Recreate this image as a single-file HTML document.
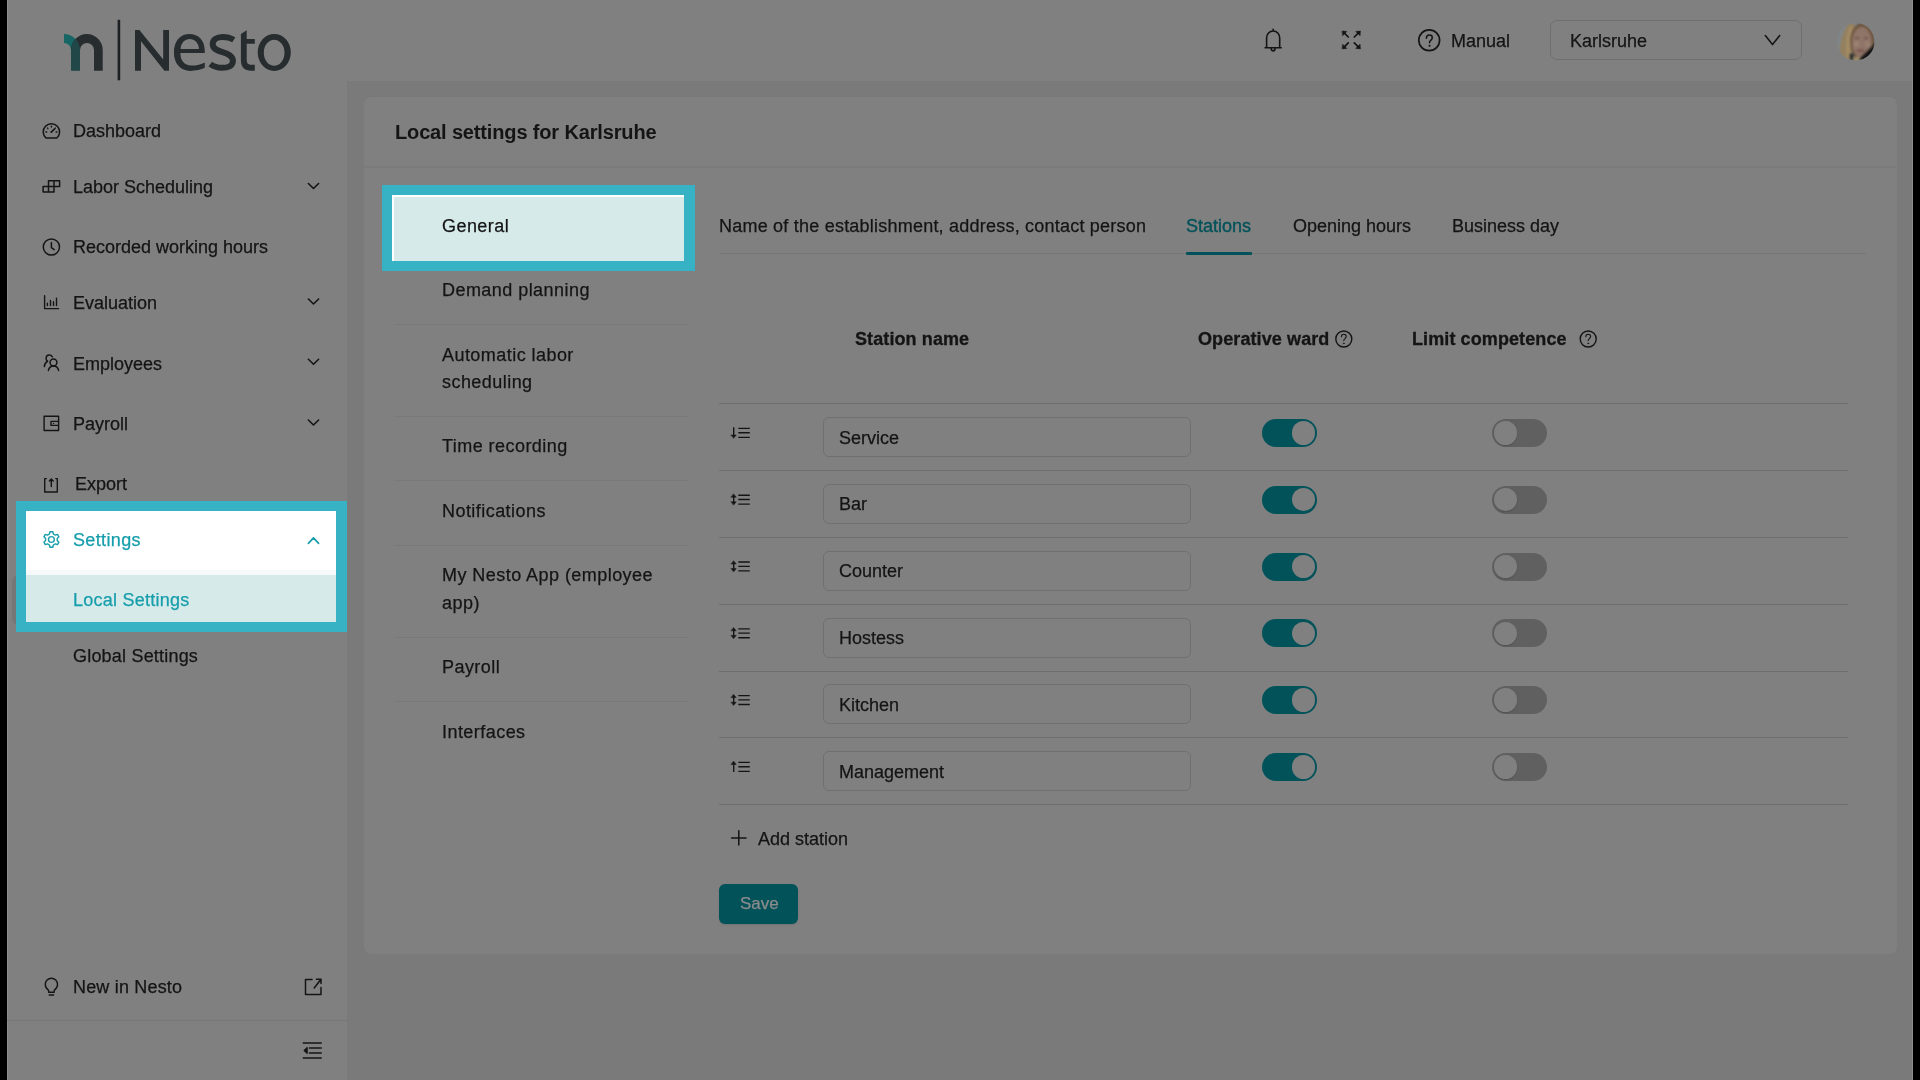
<!DOCTYPE html>
<html><head><meta charset="utf-8">
<style>
*{box-sizing:border-box;margin:0;padding:0}
html,body{width:1920px;height:1080px;overflow:hidden;background:#000}
body{position:relative;font-family:"Liberation Sans",sans-serif;color:#141414;font-size:18px;line-height:18px}
.a{position:absolute}
.t{position:absolute;white-space:nowrap;font-size:18px;line-height:18px;-webkit-text-stroke:0.25px currentColor;will-change:transform}
.b{font-weight:700;-webkit-text-stroke:0}
.div{position:absolute;height:1px;background:#787878}
svg{position:absolute;overflow:visible}
</style></head><body>
<!-- app background -->
<div class="a" style="left:7px;top:0;width:1906px;height:1080px;background:#808080"></div>
<div class="a" style="left:7px;top:0;width:1px;height:1080px;background:#8e8e8e"></div>
<div class="a" style="left:1912px;top:0;width:1px;height:1080px;background:#8e8e8e"></div>
<!-- main area bg -->
<div class="a" style="left:347px;top:81px;width:1565px;height:999px;background:#7a7a7a"></div>
<!-- card -->
<div class="a" style="left:364px;top:97px;width:1533px;height:857px;background:#808080;border-radius:7px;box-shadow:0 0 0 1px #797979"></div>

<!-- SIDEBAR -->
<!-- logo -->
<svg style="left:0;top:0" width="400" height="90" viewBox="0 0 400 90">
  <defs>
    <clipPath id="hookc"><path d="M64 34 A16 16 0 0 1 80 50 L71 50 A7 7 0 0 0 64 43 Z"/></clipPath>
  </defs>
  <path d="M64 34 A16 16 0 0 1 80 50 L71 50 A7 7 0 0 0 64 43 Z" fill="#156664"/>
  <path d="M71 50 A15.85 16 0 0 1 102.7 50 V70.8 H94 V50 A7 7 0 0 0 80 50 Z" fill="#272c2e"/>
  <path d="M71 50 A15.85 16 0 0 1 102.7 50 V70.8 H94 V50 A7 7 0 0 0 80 50 Z" fill="#214748" clip-path="url(#hookc)"/>
  <rect x="71" y="49.5" width="9" height="21.3" fill="#214748"/>
  <rect x="117.6" y="19.8" width="2.6" height="60.5" fill="#1c2022"/>
</svg>
<svg style="left:0;top:0" width="300" height="90" viewBox="0 0 300 90">
  <g fill="#272c2e">
  <path d="M135 29.9 L139.4 29.9 L163.2 59.6 L163.2 30.1 L169 30.1 L169 70.8 L164.4 70.8 L141 41.3 L141 70.8 L135 70.8 Z"/>
  <path fill-rule="evenodd" d="M204.8 53 V51 C204.8 40.6 198.6 34.1 189.4 34.1 C180 34.1 173.9 41.6 173.9 52.5 C173.9 63.6 180.5 70.9 190.3 70.9 C196 70.9 201 69.6 204.8 67.8 V62.4 C201.3 64.5 196.8 65.5 191.2 65.5 C184.4 65.5 180.4 60.6 180.4 53 Z M180.6 48.9 H199 C198.4 42.6 194.6 39.1 189.8 39.1 C184.9 39.1 181.2 42.6 180.6 48.9 Z"/>
  
  <path d="M233.8 39.8 C230.5 37.8 226.5 36.9 222.5 36.9 C216.5 36.9 212.7 39.8 212.7 44.2 C212.7 48.6 217 50.4 222.5 52.1 C228.5 54 232.9 56 232.9 60.9 C232.9 65.5 228.5 67.8 222 67.8 C217.5 67.8 213.2 66.3 210.3 64" fill="none" stroke="#272c2e" stroke-width="6"/>
  <path d="M240.9 33.9 L246.7 30.2 V39.1 H254.8 V43.75 H246.7 V59.5 C246.7 63.5 248.3 64.8 251.8 64.8 H254.8 V70.7 H251.3 C244.3 70.7 240.9 67.3 240.9 60 Z"/>
  <path fill-rule="evenodd" d="M257.7 52.4 A16.55 18.5 0 1 0 290.8 52.4 A16.55 18.5 0 1 0 257.7 52.4 Z M263.8 52.8 A10.35 13 0 1 0 284.5 52.8 A10.35 13 0 1 0 263.8 52.8 Z"/>
  </g>
  
</svg>

<!-- nav items -->
<svg style="left:0;top:0" width="348" height="1080" viewBox="0 0 348 1080" fill="none" stroke="#141414" stroke-width="1.5" stroke-linecap="round" stroke-linejoin="round">
  <!-- dashboard gauge -->
  <path d="M46 138 A8.2 8.2 0 1 1 56.8 138 Z"/>
  <path d="M51.4 132 L54.3 129.2" stroke-width="1.6"/>
  <circle cx="51.4" cy="132" r="0.9" fill="#141414" stroke="none"/>
  <path d="M51.4 126.2 v0.8 M47.6 128 l0.3 0.7 M55.3 128 l-0.3 0.7 M45.9 132 h0.8 M56.1 132 h0.8" stroke-width="1.3"/>
  <!-- labor scheduling -->
  <path d="M43.1 186.6 H54 V192 H43.1 Z M48.5 186.6 V192 M48.5 180.8 H59.6 V186.6 H48.5 Z M54 180.8 V186.6" stroke-width="1.5"/>
  <!-- clock -->
  <circle cx="51.4" cy="247" r="8.1"/>
  <path d="M51.4 242.4 V247.6 L54.2 249.6"/>
  <!-- evaluation -->
  <path d="M44.6 295.8 V308.6 H58.6 M47.4 303.3 V305.6 M50.5 300.4 V305.6 M53.5 301.6 V305.6 M56.5 298.2 V305.6" stroke-width="1.4"/>
  <!-- employees -->
  <circle cx="53.5" cy="362.5" r="3.4"/>
  <path d="M48.4 370.4 C49 367.5 51 366 53.5 366 C56 366 58 367.5 58.6 370.4"/>
  <path d="M52.4 356.8 C51.6 355.6 50.6 355 49.3 355 C47.5 355 46.1 356.5 46.1 358.4 C46.1 359.6 46.7 360.6 47.6 361.2 C45.8 362 44.6 363.9 44.3 366.6"/>
  <!-- payroll wallet -->
  <path d="M44.1 416.3 H58.6 V430.5 H44.1 Z M58.6 421.4 H51 V425.4 H58.6" stroke-width="1.4"/>
  <circle cx="53.5" cy="423.4" r="0.7" fill="#141414" stroke="none"/>
  <!-- export -->
  <path d="M46.3 478.6 H44.7 V492 H57.3 V478.6 H55.8 M51.3 486.6 V479.2 M49.4 481 L51.3 479 L53.2 481" stroke-width="1.4"/>
  <!-- chevrons -->
  <path d="M308.4 183.5 L313.5 188.5 L318.6 183.5 M308.4 299 L313.5 304 L318.6 299 M308.4 359.3 L313.5 364.3 L318.6 359.3 M308.4 420 L313.5 425 L318.6 420" stroke-width="1.6"/>
  <!-- bulb -->
  <path d="M48.6 990.3 C46.6 989 45.3 986.9 45.3 984.5 C45.3 980.9 48 978.3 51.4 978.3 C54.8 978.3 57.5 980.9 57.5 984.5 C57.5 986.9 56.2 989 54.2 990.3 V992.2 H48.6 Z M49.2 995 H53.6" stroke-width="1.4"/>
  <!-- external link -->
  <path d="M312 979.5 H305.5 V994.5 H321 V987.5 M314.2 988 L321 979.2 M316.5 979.2 H321 V983.4" stroke-width="1.5"/>
  <!-- collapse -->
  <path d="M303.3 1043 H321.2 M303.3 1058 H321.2 M309.5 1048 H321.2 M309.5 1053 H321.2" stroke-width="1.6"/>
  <path d="M307 1047.6 L303.8 1050.5 L307 1053.4 Z" fill="#141414" stroke-width="1"/>
</svg>
<div class="t" style="left:73px;top:122px">Dashboard</div>
<div class="t" style="left:73px;top:178px">Labor Scheduling</div>
<div class="t" style="left:73px;top:238px">Recorded working hours</div>
<div class="t" style="left:73px;top:294px">Evaluation</div>
<div class="t" style="left:73px;top:355px">Employees</div>
<div class="t" style="left:73px;top:415px">Payroll</div>
<div class="t" style="left:74.5px;top:475px">Export</div>
<div class="t" style="left:73px;top:647px;letter-spacing:0.2px">Global Settings</div>
<div class="t" style="left:73px;top:978px;letter-spacing:0.18px">New in Nesto</div>
<div class="div" style="left:7px;top:1020px;width:341px;background:#777"></div>

<!-- settings highlight -->
<div class="a" style="left:12px;top:574px;width:10px;height:52px;background:#767676;border-radius:8px 0 0 8px"></div>
<div class="a" style="left:16px;top:501px;width:331px;height:131px;background:#36b2c4"></div>
<div class="a" style="left:26px;top:511px;width:310px;height:111px;background:#fff"></div>
<div class="a" style="left:26px;top:570px;width:310px;height:5px;background:#f6f9f9"></div>
<div class="a" style="left:26px;top:575px;width:310px;height:47px;background:#d6ebe9"></div>
<svg style="left:0;top:0.7px" width="348" height="700" viewBox="0 0 348 700" fill="none" stroke="#169dab" stroke-width="1.5" stroke-linecap="round" stroke-linejoin="round">
  <path d="M50 530.8 L52.8 530.8 L53.4 533 L55.3 534.1 L57.5 533.4 L58.9 535.8 L57.2 537.4 L57.2 539.6 L58.9 541.2 L57.5 543.6 L55.3 542.9 L53.4 544 L52.8 546.2 L50 546.2 L49.4 544 L47.5 542.9 L45.3 543.6 L43.9 541.2 L45.6 539.6 L45.6 537.4 L43.9 535.8 L45.3 533.4 L47.5 534.1 L49.4 533 Z" stroke-width="1.4"/>
  <circle cx="51.4" cy="538.5" r="2.9" stroke-width="1.4"/>
  <path d="M308.4 542.3 L313.5 536.9 L318.6 542.3" stroke-width="1.7"/>
</svg>
<div class="t" style="left:73px;top:531px;color:#169dab;letter-spacing:0.35px">Settings</div>
<div class="t" style="left:73px;top:591px;color:#169dab;letter-spacing:0.25px">Local Settings</div>


<!-- HEADER -->
<svg style="left:0;top:0" width="1920" height="80" viewBox="0 0 1920 80" fill="none" stroke="#141414" stroke-width="1.6" stroke-linecap="round" stroke-linejoin="round">
  <!-- bell -->
  <path d="M1266.6 47.8 V38.2 C1266.6 34 1269.5 31 1273.15 31 C1276.8 31 1279.7 34 1279.7 38.2 V47.8 M1265.1 47.8 H1281.2 M1273.15 29.3 V31 M1271.2 48.6 C1271.4 50.3 1272.3 50.9 1273.15 50.9 C1274 50.9 1274.9 50.3 1275.1 48.6" stroke-width="1.6"/>
  <!-- fullscreen arrows -->
  <path d="M1343.6 32.3 L1348.3 37 M1359 32.3 L1354.3 37 M1343.6 47.6 L1348.3 42.9 M1359 47.6 L1354.3 42.9" stroke-width="1.7"/>
  <path d="M1342.4 31.1 L1346.8 31.5 L1342.8 35.5 Z M1360.2 31.1 L1355.8 31.5 L1359.8 35.5 Z M1342.4 48.8 L1346.8 48.4 L1342.8 44.4 Z M1360.2 48.8 L1355.8 48.4 L1359.8 44.4 Z" fill="#141414" stroke-width="0.6"/>
  <!-- help circle -->
  <circle cx="1429.2" cy="40.2" r="10.4" stroke-width="1.7"/>
  <path d="M1426.4 38.2 C1426.4 36.3 1427.7 35.1 1429.4 35.1 C1431.1 35.1 1432.3 36.3 1432.3 37.8 C1432.3 40 1429.5 40.2 1429.5 42.7" stroke-width="1.5"/>
  <circle cx="1429.4" cy="45.8" r="0.6" fill="#141414" stroke-width="0.8"/>
  <!-- dropdown chevron -->
  <path d="M1765.3 35.6 L1772.5 44.6 L1779.7 35.6" stroke-width="1.6"/>
</svg>
<div class="t" style="left:1451px;top:32px">Manual</div>
<div class="a" style="left:1550px;top:20px;width:252px;height:40px;border:1px solid #6f6f6f;border-radius:7px"></div>
<div class="t" style="left:1570px;top:32px">Karlsruhe</div>
<!-- avatar -->
<svg style="left:1836.7px;top:22.9px" width="37.5" height="37.5" viewBox="0 0 37.5 37.5">
 <defs><clipPath id="avc"><circle cx="18.75" cy="18.75" r="18.75"/></clipPath><filter id="avb" x="-20%" y="-20%" width="140%" height="140%"><feGaussianBlur stdDeviation="0.9"/></filter></defs>
 <g clip-path="url(#avc)"><g filter="url(#avb)">
  <rect x="-3" y="-3" width="44" height="44" fill="#7f868b"/>
  <path d="M13 -1 C7.5 5 4.5 13 3 22 C2 29 2.5 35 4 40 L20 40 L21 4 Z" fill="#93805e"/>
  <path d="M13 3 C10 10 8.5 20 9.5 36 L13 36 C12.5 24 13 14 16 4 Z" fill="#a58d66"/>
  <ellipse cx="25.5" cy="18.5" rx="12.5" ry="19" fill="#6e5640"/>
  <ellipse cx="24.8" cy="19.5" rx="9.6" ry="15.5" fill="#8f7567"/>
  <ellipse cx="19.5" cy="21" rx="3" ry="3" fill="#9c8171"/>
  <ellipse cx="30.5" cy="21" rx="3" ry="3" fill="#9a7f6f"/>
  <rect x="18" y="14.5" width="4" height="1.6" rx="0.8" fill="#64493e"/>
  <rect x="27" y="14.5" width="4" height="1.6" rx="0.8" fill="#64493e"/>
  <ellipse cx="23.5" cy="27.8" rx="4" ry="1.3" fill="#7a5048"/>
  <path d="M17.5 40 L39 19 L42 42 Z" fill="#151515"/>
  <path d="M12 31 L16.5 30 L18 38 L13 38 Z" fill="#2c3038"/>
  <path d="M16.5 34 L23 34 L22 40 L16 40 Z" fill="#9c8a6c"/>
 </g></g>
</svg>
</div>


<!-- CARD CONTENT -->
<div class="t b" style="left:395px;top:122px;font-size:20px;line-height:20px;letter-spacing:-0.15px">Local settings for Karlsruhe</div>
<div class="div" style="left:364px;top:166px;width:1532px;height:2px;background:#7b7b7b"></div>
<div class="div" style="left:394px;top:324px;width:294px;background:#797979"></div>
<div class="div" style="left:394px;top:416px;width:294px;background:#797979"></div>
<div class="div" style="left:394px;top:480px;width:294px;background:#797979"></div>
<div class="div" style="left:394px;top:545px;width:294px;background:#797979"></div>
<div class="div" style="left:394px;top:637px;width:294px;background:#797979"></div>
<div class="div" style="left:394px;top:701px;width:294px;background:#797979"></div>
<div class="t" style="left:442px;top:281px;letter-spacing:0.45px">Demand planning</div>
<div class="t" style="left:442px;top:346px;letter-spacing:0.45px">Automatic labor</div>
<div class="t" style="left:442px;top:373px;letter-spacing:0.45px">scheduling</div>
<div class="t" style="left:442px;top:437px;letter-spacing:0.45px">Time recording</div>
<div class="t" style="left:442px;top:502px;letter-spacing:0.45px">Notifications</div>
<div class="t" style="left:442px;top:566px;letter-spacing:0.45px">My Nesto App (employee</div>
<div class="t" style="left:442px;top:594px;letter-spacing:0.45px">app)</div>
<div class="t" style="left:442px;top:658px;letter-spacing:0.45px">Payroll</div>
<div class="t" style="left:442px;top:723px;letter-spacing:0.45px">Interfaces</div>
<div class="a" style="left:381.5px;top:185px;width:313px;height:86px;background:#36b2c4"></div>
<div class="a" style="left:392px;top:195px;width:292px;height:66px;background:#fff"></div>
<div class="a" style="left:394px;top:196.5px;width:290px;height:64.5px;background:#d6ebe9"></div>
<div class="t" style="left:442px;top:217px;letter-spacing:0.45px">General</div>
<div class="div" style="left:719px;top:253.3px;width:1147px;height:1.2px;background:#767676"></div>
<div class="t" style="left:719px;top:217px;letter-spacing:0.22px">Name of the establishment, address, contact person</div>
<div class="t" style="left:1186px;top:217px;color:#03525a;-webkit-text-stroke:0.4px #03525a">Stations</div>
<div class="a" style="left:1186px;top:252px;width:66px;height:3px;background:#02505a;border-radius:1px"></div>
<div class="t" style="left:1293px;top:217px">Opening hours</div>
<div class="t" style="left:1452px;top:217px">Business day</div>
<div class="t b" style="left:855px;top:330px;-webkit-text-stroke:0.3px currentColor;letter-spacing:0.1px">Station name</div>
<div class="t b" style="left:1198px;top:330px;-webkit-text-stroke:0.3px currentColor;letter-spacing:0.1px">Operative ward</div>
<div class="t b" style="left:1412px;top:330px;-webkit-text-stroke:0.3px currentColor;letter-spacing:0.1px">Limit competence</div>
<div class="div" style="left:719px;top:403px;width:1129px;height:1px;background:#6e6e6e"></div>
<div class="div" style="left:719px;top:470px;width:1129px;height:1px;background:#6e6e6e"></div>
<div class="a" style="left:823px;top:417.2px;width:368px;height:40px;border:1px solid #707070;border-radius:6px"></div>
<div class="t" style="left:839px;top:428.6px">Service</div>
<div class="a" style="left:1262px;top:419.0px;width:55px;height:28px;border-radius:14px;background:#02525a"></div>
<div class="a" style="left:1291.8px;top:421.2px;width:23.4px;height:23.4px;border-radius:50%;background:#808080"></div>
<div class="a" style="left:1492px;top:419.0px;width:55px;height:28px;border-radius:14px;background:#606060"></div>
<div class="a" style="left:1494px;top:421.2px;width:23.4px;height:23.4px;border-radius:50%;background:#808080;box-shadow:0 1px 1.5px rgba(0,0,0,0.15)"></div>
<div class="div" style="left:719px;top:537px;width:1129px;height:1px;background:#6e6e6e"></div>
<div class="a" style="left:823px;top:484.0px;width:368px;height:40px;border:1px solid #707070;border-radius:6px"></div>
<div class="t" style="left:839px;top:495.4px">Bar</div>
<div class="a" style="left:1262px;top:485.8px;width:55px;height:28px;border-radius:14px;background:#02525a"></div>
<div class="a" style="left:1291.8px;top:488.0px;width:23.4px;height:23.4px;border-radius:50%;background:#808080"></div>
<div class="a" style="left:1492px;top:485.8px;width:55px;height:28px;border-radius:14px;background:#606060"></div>
<div class="a" style="left:1494px;top:488.0px;width:23.4px;height:23.4px;border-radius:50%;background:#808080;box-shadow:0 1px 1.5px rgba(0,0,0,0.15)"></div>
<div class="div" style="left:719px;top:604px;width:1129px;height:1px;background:#6e6e6e"></div>
<div class="a" style="left:823px;top:550.8px;width:368px;height:40px;border:1px solid #707070;border-radius:6px"></div>
<div class="t" style="left:839px;top:562.2px">Counter</div>
<div class="a" style="left:1262px;top:552.6px;width:55px;height:28px;border-radius:14px;background:#02525a"></div>
<div class="a" style="left:1291.8px;top:554.8px;width:23.4px;height:23.4px;border-radius:50%;background:#808080"></div>
<div class="a" style="left:1492px;top:552.6px;width:55px;height:28px;border-radius:14px;background:#606060"></div>
<div class="a" style="left:1494px;top:554.8px;width:23.4px;height:23.4px;border-radius:50%;background:#808080;box-shadow:0 1px 1.5px rgba(0,0,0,0.15)"></div>
<div class="div" style="left:719px;top:671px;width:1129px;height:1px;background:#6e6e6e"></div>
<div class="a" style="left:823px;top:617.6px;width:368px;height:40px;border:1px solid #707070;border-radius:6px"></div>
<div class="t" style="left:839px;top:629.0px">Hostess</div>
<div class="a" style="left:1262px;top:619.4px;width:55px;height:28px;border-radius:14px;background:#02525a"></div>
<div class="a" style="left:1291.8px;top:621.6px;width:23.4px;height:23.4px;border-radius:50%;background:#808080"></div>
<div class="a" style="left:1492px;top:619.4px;width:55px;height:28px;border-radius:14px;background:#606060"></div>
<div class="a" style="left:1494px;top:621.6px;width:23.4px;height:23.4px;border-radius:50%;background:#808080;box-shadow:0 1px 1.5px rgba(0,0,0,0.15)"></div>
<div class="div" style="left:719px;top:737px;width:1129px;height:1px;background:#6e6e6e"></div>
<div class="a" style="left:823px;top:684.4px;width:368px;height:40px;border:1px solid #707070;border-radius:6px"></div>
<div class="t" style="left:839px;top:695.8px">Kitchen</div>
<div class="a" style="left:1262px;top:686.2px;width:55px;height:28px;border-radius:14px;background:#02525a"></div>
<div class="a" style="left:1291.8px;top:688.4px;width:23.4px;height:23.4px;border-radius:50%;background:#808080"></div>
<div class="a" style="left:1492px;top:686.2px;width:55px;height:28px;border-radius:14px;background:#606060"></div>
<div class="a" style="left:1494px;top:688.4px;width:23.4px;height:23.4px;border-radius:50%;background:#808080;box-shadow:0 1px 1.5px rgba(0,0,0,0.15)"></div>
<div class="div" style="left:719px;top:804px;width:1129px;height:1px;background:#6e6e6e"></div>
<div class="a" style="left:823px;top:751.2px;width:368px;height:40px;border:1px solid #707070;border-radius:6px"></div>
<div class="t" style="left:839px;top:762.6px">Management</div>
<div class="a" style="left:1262px;top:753.0px;width:55px;height:28px;border-radius:14px;background:#02525a"></div>
<div class="a" style="left:1291.8px;top:755.2px;width:23.4px;height:23.4px;border-radius:50%;background:#808080"></div>
<div class="a" style="left:1492px;top:753.0px;width:55px;height:28px;border-radius:14px;background:#606060"></div>
<div class="a" style="left:1494px;top:755.2px;width:23.4px;height:23.4px;border-radius:50%;background:#808080;box-shadow:0 1px 1.5px rgba(0,0,0,0.15)"></div>
<svg style="left:0;top:0" width="1920" height="1080" viewBox="0 0 1920 1080" fill="none" stroke="#141414" stroke-width="1.4" stroke-linecap="round" stroke-linejoin="round">
<circle cx="1343.8" cy="339" r="8"/>
<path d="M1341.3999999999999 336.8 C1341.3999999999999 335.2 1342.5 334.2 1343.8 334.2 C1345.2 334.2 1346.2 335.2 1346.2 336.5 C1346.2 338.5 1343.8 338.6 1343.8 340.6" stroke-width="1.1"/>
<circle cx="1343.8" cy="343.4" r="0.5" fill="#141414" stroke-width="0.6"/>
<circle cx="1588.2" cy="339" r="8"/>
<path d="M1585.8 336.8 C1585.8 335.2 1586.9 334.2 1588.2 334.2 C1589.6000000000001 334.2 1590.6000000000001 335.2 1590.6000000000001 336.5 C1590.6000000000001 338.5 1588.2 338.6 1588.2 340.6" stroke-width="1.1"/>
<circle cx="1588.2" cy="343.4" r="0.5" fill="#141414" stroke-width="0.6"/>
<path d="M738.3 428.4 H749.8 M738.3 432.7 H749.8 M738.3 437.3 H749.8 M733.7 427.3 V435.7" stroke-width="1.35" stroke-linecap="butt"/><path d="M731.2 435.0 L736.2 435.0 L733.7 438.1 Z" fill="#141414" stroke-width="0.5"/>
<path d="M738.3 495.2 H749.8 M738.3 499.5 H749.8 M738.3 504.1 H749.8 M733.7 496.5 V502.5" stroke-width="1.35" stroke-linecap="butt"/><path d="M731.2 497.2 L736.2 497.2 L733.7 494.1 Z M731.2 501.8 L736.2 501.8 L733.7 504.9 Z" fill="#141414" stroke-width="0.5"/>
<path d="M738.3 562.0 H749.8 M738.3 566.3 H749.8 M738.3 570.9 H749.8 M733.7 563.3 V569.3" stroke-width="1.35" stroke-linecap="butt"/><path d="M731.2 564.0 L736.2 564.0 L733.7 560.9 Z M731.2 568.6 L736.2 568.6 L733.7 571.7 Z" fill="#141414" stroke-width="0.5"/>
<path d="M738.3 628.8 H749.8 M738.3 633.1 H749.8 M738.3 637.7 H749.8 M733.7 630.1 V636.1" stroke-width="1.35" stroke-linecap="butt"/><path d="M731.2 630.8 L736.2 630.8 L733.7 627.7 Z M731.2 635.4 L736.2 635.4 L733.7 638.5 Z" fill="#141414" stroke-width="0.5"/>
<path d="M738.3 695.6 H749.8 M738.3 699.9 H749.8 M738.3 704.5 H749.8 M733.7 696.9 V702.9" stroke-width="1.35" stroke-linecap="butt"/><path d="M731.2 697.6 L736.2 697.6 L733.7 694.5 Z M731.2 702.2 L736.2 702.2 L733.7 705.3 Z" fill="#141414" stroke-width="0.5"/>
<path d="M738.3 762.4 H749.8 M738.3 766.7 H749.8 M738.3 771.3 H749.8 M733.7 763.7 V772.1" stroke-width="1.35" stroke-linecap="butt"/><path d="M731.2 764.4 L736.2 764.4 L733.7 761.3 Z" fill="#141414" stroke-width="0.5"/>
<path d="M738.8 830.8 V845.1 M731.6 838 H746" stroke-width="1.5"/>
</svg>
<div class="t" style="left:758px;top:830px">Add station</div>
<div class="a" style="left:719px;top:883.6px;width:79px;height:40px;border-radius:6px;background:#02525a;box-shadow:0 1px 2px rgba(0,0,0,0.12)"></div>
<div class="t" style="left:739.5px;top:895px;font-size:17px;color:#8c8c8c">Save</div>

</body></html>
